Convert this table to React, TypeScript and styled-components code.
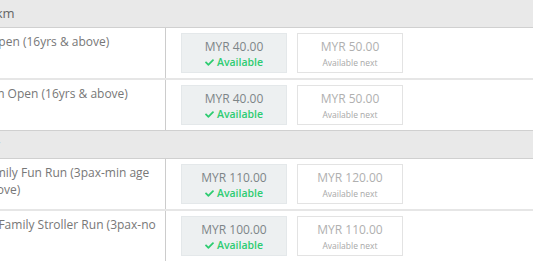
import React from "react";
import styled, { createGlobalStyle } from "styled-components";
import { FaCheck } from "react-icons/fa";

const GlobalStyle = createGlobalStyle`
  html, body {
    margin: 0;
    padding: 0;
    background: #ffffff;
    overflow: hidden;
  }
  body {
    font-family: "Open Sans", "Liberation Sans", Arial, sans-serif;
  }
`;

const Table = styled.div`
  margin-left: -47px;
  margin-top: -1px;
  width: calc(100% + 47px);
  display: flex;
  flex-direction: column;
`;

const SectionHeader = styled.div`
  box-sizing: border-box;
  height: 29px;
  padding: 4px 8px 0 8px;
  background: #e9e9e9;
  border-top: 1px solid #d0d0d0;
  border-bottom: 1px solid #d0d0d0;
  color: #666666;
  font-size: 13px;
  line-height: 18px;
  white-space: nowrap;
`;

const Row = styled.div<{ $first: boolean }>`
  display: grid;
  grid-template-columns: 213px 1fr;
  border-top: ${(p) => (p.$first ? "none" : "2px solid #e6e6e6")};
`;

const LabelCell = styled.div`
  box-sizing: border-box;
  padding: 5px 7px 5px 8px;
  border-right: 1px solid #cccccc;
  color: #777777;
  font-size: 12px;
  line-height: 17px;
  min-height: 50px;
`;

const PriceCell = styled.div`
  display: flex;
  gap: 10px;
  padding: 5px 15px;
  align-items: flex-start;
`;

const PriceBox = styled.div<{ $current: boolean }>`
  box-sizing: border-box;
  width: 106px;
  height: 40px;
  padding-top: 5px;
  display: flex;
  flex-direction: column;
  align-items: center;
  background: ${(p) => (p.$current ? "#edf0f1" : "#ffffff")};
  border: 1px solid ${(p) => (p.$current ? "#e4e8ea" : "#e3e3e3")};
`;

const Amount = styled.div<{ $current: boolean }>`
  font-size: 12px;
  line-height: 16px;
  color: ${(p) => (p.$current ? "#7d8588" : "#b0b0b0")};
  white-space: nowrap;
`;

const Status = styled.div`
  display: flex;
  align-items: center;
  gap: 3px;
  font-size: 10.5px;
  font-weight: 600;
  line-height: 14px;
  color: #2ecc71;
  white-space: nowrap;
  svg {
    width: 9px;
    height: 9px;
  }
`;

const NextNote = styled.div`
  font-size: 8.5px;
  line-height: 13px;
  margin-top: 1px;
  color: #a8a8a8;
  white-space: nowrap;
`;

type Item = { label: string; price: string; next: string };
type Section = { title: string; rows: Item[] };

const sections: Section[] = [
  {
    title: "Run 5km",
    rows: [
      { label: "Men Open (16yrs & above)", price: "MYR 40.00", next: "MYR 50.00" },
      { label: "Women Open (16yrs & above)", price: "MYR 40.00", next: "MYR 50.00" },
    ],
  },
  {
    title: "Family",
    rows: [
      {
        label: "VIP Family Fun Run (3pax-min age 7 & above)",
        price: "MYR 110.00",
        next: "MYR 120.00",
      },
      {
        label: "3.5km Family Stroller Run (3pax-no limit)",
        price: "MYR 100.00",
        next: "MYR 110.00",
      },
    ],
  },
];

export default function App() {
  return (
    <>
      <GlobalStyle />
      <Table>
        {sections.map((s) => (
          <React.Fragment key={s.title}>
            <SectionHeader>{s.title}</SectionHeader>
            {s.rows.map((r, i) => (
              <Row key={r.label} $first={i === 0}>
                <LabelCell>{r.label}</LabelCell>
                <PriceCell>
                  <PriceBox $current>
                    <Amount $current>{r.price}</Amount>
                    <Status>
                      <FaCheck />
                      Available
                    </Status>
                  </PriceBox>
                  <PriceBox $current={false}>
                    <Amount $current={false}>{r.next}</Amount>
                    <NextNote>Available next</NextNote>
                  </PriceBox>
                </PriceCell>
              </Row>
            ))}
          </React.Fragment>
        ))}
      </Table>
    </>
  );
}
